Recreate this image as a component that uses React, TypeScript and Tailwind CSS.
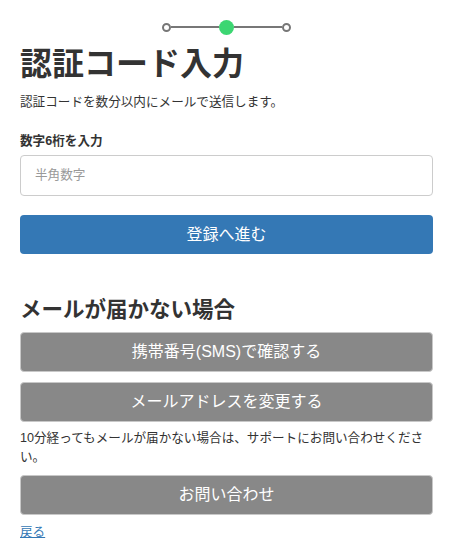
import React from "react";

const font = { fontFamily: '"Liberation Sans", "Noto Sans CJK JP", sans-serif' };

export default function App() {
  return (
    <div className="w-[451px] h-[557px] bg-white text-[#333] pl-5 pr-[18px]" style={font}>
      <div className="flex items-center justify-center pt-[20px] h-[34px]">
        <div className="w-[9px] h-[9px] rounded-full border-2 border-[#777] bg-white" />
        <div className="w-[48px] h-[2px] bg-[#777]" />
        <div className="w-[15px] h-[15px] rounded-full bg-[#3cd672]" />
        <div className="w-[48px] h-[2px] bg-[#777]" />
        <div className="w-[9px] h-[9px] rounded-full border-2 border-[#777] bg-white" />
      </div>
      <h1 className="text-[32px] font-bold leading-[40px] mt-[10px]">認証コード入力</h1>
      <p className="text-[12.6px] leading-[18px] mt-[9px]">認証コードを数分以内にメールで送信します。</p>
      <label className="block text-[12.6px] font-bold leading-[18px] mt-[21px]">数字6桁を入力</label>
      <div className="mt-[5px] h-[41px] border border-[#ccc] rounded-[4px] flex items-center px-[14px]">
        <span className="text-[12.6px] text-[#999]">半角数字</span>
      </div>
      <button className="mt-[19px] w-full h-[39px] rounded-[4px] bg-[#3478b5] text-white text-[16px] flex items-center justify-center">
        登録へ進む
      </button>
      <h2 className="text-[21.5px] font-bold leading-[28px] mt-[42px]">メールが届かない場合</h2>
      <button className="mt-[8px] w-full h-[40px] rounded-[4px] bg-[#888] border border-[#c8c8c8] text-white text-[16px] flex items-center justify-center">
        携帯番号(SMS)で確認する
      </button>
      <button className="mt-[10px] w-full h-[40px] rounded-[4px] bg-[#888] border border-[#c8c8c8] text-white text-[16px] flex items-center justify-center">
        メールアドレスを変更する
      </button>
      <p className="text-[12.6px] leading-[19px] mt-[7px]">
        10分経ってもメールが届かない場合は、サポートにお問い合わせください。
      </p>
      <button className="mt-[8px] w-full h-[40px] rounded-[4px] bg-[#888] border border-[#c8c8c8] text-white text-[16px] flex items-center justify-center">
        お問い合わせ
      </button>
      <a href="#" className="block mt-[8px] text-[12.6px] leading-[18px] text-[#3478b5] underline">戻る</a>
    </div>
  );
}
